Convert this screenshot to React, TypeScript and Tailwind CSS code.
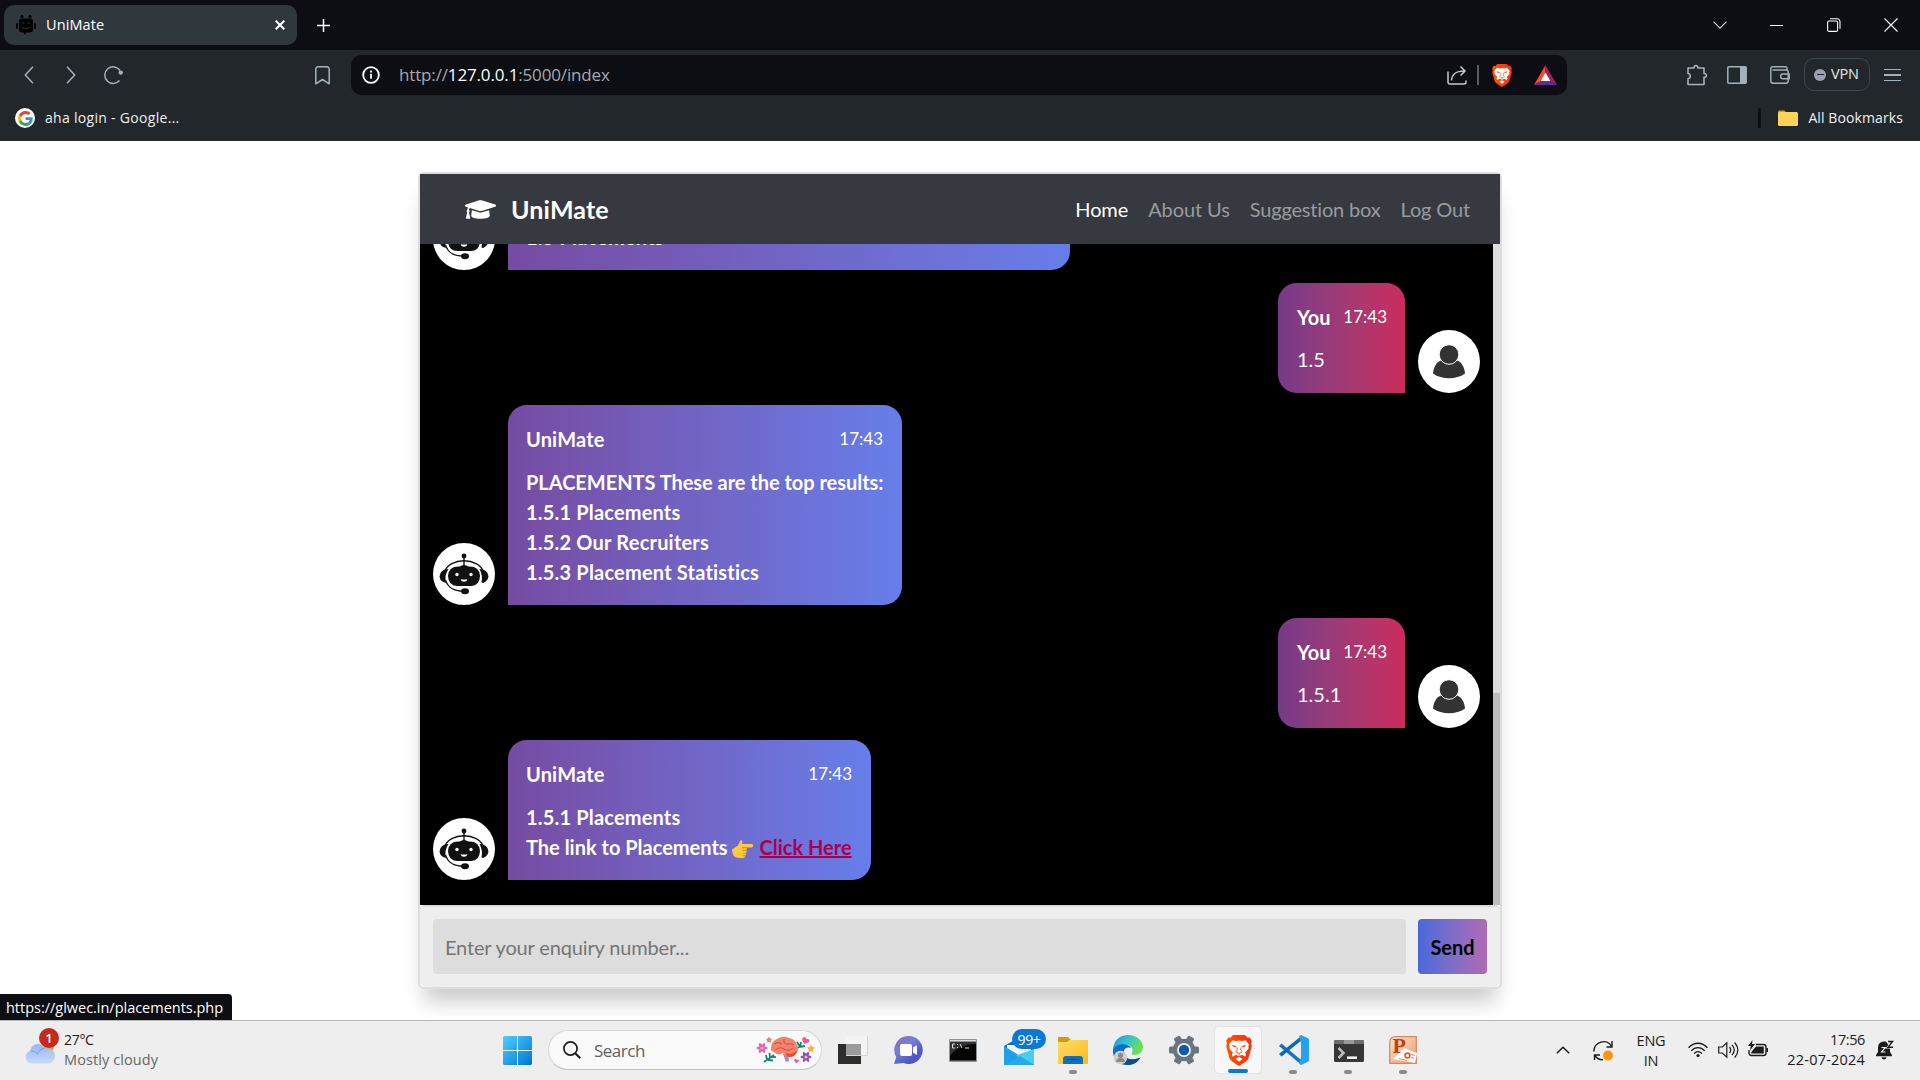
import React from "react";
import { FaGraduationCap } from "react-icons/fa";

const UI = "font-['Open_Sans','Noto_Sans',sans-serif]";

function BraveLion({ className }: { className: string }) {
  return (
    <svg viewBox="0 0 26 31" preserveAspectRatio="none" className={className}>
      <defs>
        <linearGradient id="lion" x1="0" x2="1">
          <stop offset="0" stopColor="#ff5500" />
          <stop offset="1" stopColor="#ff2b10" />
        </linearGradient>
      </defs>
      <path d="M7 0h12l2.500 2.800 2.300-.300 2 3.600-.800 2.600.800 2.300-3.100 11.600c-.500 1.700-1.400 2.800-2.800 3.800L13 31l-6.900-4.600c-1.400-1-2.300-2.100-2.800-3.800L.2 11 1 8.700.2 6.100l2-3.600 2.300.300z" fill="url(#lion)" />
      <path d="M13 5.500l3 .500 3.500-.800 3.500 4-.600 2.300.2 2-3.500 4.200 1 1.800-.8 2.200-3.300-1.900L13 21.300l-3-1.500-3.300 1.900-.8-2.200 1-1.800L3.400 13.500l.2-2L3 9.200l3.500-4 3.500.8z" fill="#fff" />
      <path d="M13 21.800l3.500 2.200L13 26.700l-3.500-2.700z" fill="#fff" />
      <path d="M6.300 10l4.200 1.600-2.800.300zM19.700 10l-4.200 1.600 2.800.3z" fill="#fb4a12" stroke="#fb4a12" strokeWidth=".5" />
      <path d="M11 12.500l.3 2.500-1.600 1.600L13 18.600l3.300-2L14.700 15l.3-2.500M13 18.600v2.200" stroke="#fb4a12" strokeWidth=".9" fill="none" />
    </svg>
  );
}

function TabStrip() {
  return (
    <div className="flex h-[50px] items-center bg-[#0d0e13] pl-1 text-[#e9ebee]">
      <div className="flex h-10 w-[293px] items-center rounded-[10px] bg-[#30373d] pl-3 pr-[12px]">
        <svg viewBox="0 0 20 20" className="h-5 w-5">
          <path d="M6 0v3M14 0v3" stroke="#000" strokeWidth="1.800" />
          <circle cx="6" cy="1.500" r="1.500" /><circle cx="14" cy="1.500" r="1.500" />
          <path d="M6 3.500h8a3 3 0 0 1 3 3v8a3 3 0 0 1-3 3h-3.500L8 20v-2.500H6a3 3 0 0 1-3-3v-8a3 3 0 0 1 3-3z" />
          <rect x="0" y="8" width="2" height="6" rx="1" /><rect x="18" y="8" width="2" height="6" rx="1" />
          <path d="M6 8.500q1.200-1.500 2.500 0M11.500 8.500q1.200-1.500 2.500 0M6.500 12.500q3.500 2 7 0" stroke="#30373d" strokeWidth="1" fill="none" />
        </svg>
        <span className="ml-[10px] text-[14.500px] tracking-[0.100px] text-white">UniMate</span>
        <svg viewBox="0 0 10 10" className="ml-auto h-[10px] w-[10px]"><path d="M.7.7l8.600 8.600M9.300.7L.7 9.300" stroke="#fff" strokeWidth="2" /></svg>
      </div>
      <svg viewBox="0 0 13 13" className="ml-5 h-[13px] w-[13px]"><path d="M6.500 0v13M0 6.500h13" stroke="#fff" strokeWidth="1.500" /></svg>
      <svg viewBox="0 0 14 8" className="ml-auto h-2 w-[14px]"><path d="M.5.700L7 7.200 13.500.7" stroke="#d7d7da" strokeWidth="1.100" fill="none" /></svg>
      <div className="ml-[43px] h-px w-[13px] bg-white" />
      <svg viewBox="0 0 14 14" className="ml-[44px] h-[14px] w-[14px]" fill="none" stroke="#fff" strokeWidth="1.100">
        <rect x=".6" y="3" width="10" height="10.400" rx="1.500" /><path d="M3 .800h7a3 3 0 0 1 3 3v7" />
      </svg>
      <svg viewBox="0 0 14 14" className="ml-[43px] mr-[22px] h-[14px] w-[14px]"><path d="M.5.500l13 13M13.500.5l-13 13" stroke="#f2f2f2" strokeWidth="1.200" /></svg>
    </div>
  );
}

function Toolbar() {
  return (
    <div className="flex h-[50px] items-center bg-[#22272b] text-[#a3b2ba]">
      <svg viewBox="0 0 10 18" className="ml-6 h-[18px] w-[10px]"><path d="M9 .7L1.300 9 9 17.300" stroke="currentColor" strokeWidth="1.500" fill="none" /></svg>
      <svg viewBox="0 0 10 18" className="ml-8 h-[18px] w-[10px]"><path d="M1 .7L8.700 9 1 17.300" stroke="currentColor" strokeWidth="1.500" fill="none" /></svg>
      <svg viewBox="0 0 20 20" className="ml-7 h-5 w-5" fill="none">
        <path d="M15.500 15.500A8.300 8.300 0 1 1 16 5.500" stroke="currentColor" strokeWidth="1.500" />
        <circle cx="16.800" cy="7.600" r="2.200" fill="currentColor" />
      </svg>
      <svg viewBox="0 0 15 19" className="ml-[191px] h-[19px] w-[15px]" fill="none"><path d="M.8 3a2.200 2.200 0 0 1 2.200-2.200h9A2.200 2.200 0 0 1 14.200 3v14.800l-6.700-4.300L.8 17.800z" stroke="currentColor" strokeWidth="1.500" strokeLinejoin="round" /></svg>
      <div className="ml-[21px] flex h-10 w-[1216px] items-center rounded-[10px] bg-[#0d0e13] pl-[11px] pr-[10px]">
        <svg viewBox="0 0 18 18" className="h-[18px] w-[18px]"><circle cx="9" cy="9" r="7.800" stroke="#fff" strokeWidth="1.800" fill="none" /><path d="M9 7.800v5M9 4.600v1.800" stroke="#fff" strokeWidth="1.800" /></svg>
        <span className="ml-[19px] whitespace-nowrap text-[17px] tracking-[-0.150px] text-[#a5a8ad]">http://<span className="text-white">127.0.0.1</span>:5000/index</span>
        <svg viewBox="0 0 20 20" className="ml-auto h-5 w-5" fill="none" stroke="#c6c8cb" strokeWidth="1.500">
          <path d="M1 6.500V17a2 2 0 0 0 2 2h14a2 2 0 0 0 2-2v-1.500" /><path d="M4.500 15.500C5 9.500 8 6 17.500 6M13.500 1.500L18 6l-4.500 4.500" />
        </svg>
        <div className="ml-[10px] h-5 w-[2px] bg-[#5b5d62]" />
        <BraveLion className="ml-[13px] h-[23px] w-5" />
        <svg viewBox="0 0 23 20" className="ml-[22px] h-5 w-[23px]">
          <path d="M11.500 0L0 20l7-3.700L11.500 8z" fill="#ff4724" /><path d="M11.500 0L23 20l-7-3.700L11.500 8z" fill="#9e1f63" /><path d="M0 20l7-4h9l7 4z" fill="#662d91" /><path d="M11.500 7.500l4.800 8.500H6.700z" fill="#fff" />
        </svg>
      </div>
      <svg viewBox="0 0 22 22" className="ml-[119px] h-[22px] w-[22px]" fill="none" stroke="currentColor" strokeWidth="1.600" strokeLinejoin="round">
        <path d="M2 4h6c-.3-3.300 4.200-3.300 3.900 0H18v5.500c3.200-.3 3.200 4.200 0 3.900V20.500H2v-5.800c3-.3 3-5 0-5.200z" />
      </svg>
      <svg viewBox="0 0 20 18" className="ml-[19px] h-[18px] w-5"><rect x=".8" y=".8" width="18.400" height="16.400" rx="1" fill="none" stroke="currentColor" strokeWidth="1.500" /><path d="M13 1h6v16h-6z" fill="currentColor" /></svg>
      <svg viewBox="0 0 20 18" className="ml-[23px] h-[18px] w-5" fill="none" stroke="currentColor" strokeWidth="1.400">
        <path d="M17 4V2.300A1.500 1.500 0 0 0 15.500.8h-13A1.700 1.700 0 0 0 .8 2.500v12.200a2.500 2.500 0 0 0 2.500 2.500h12.400a2.500 2.500 0 0 0 2.500-2.500V6a2 2 0 0 0-2-2H2.500" /><path d="M19.200 8h-6.500a2 2 0 0 0-2 2v.7a2 2 0 0 0 2 2h6.500z" />
      </svg>
      <div className="ml-[14px] mb-[1px] flex h-[33px] w-[66px] items-center rounded-[10px] border border-[#3d474d] pl-[9px] text-[14.500px] text-[#e6e9ef]">
        <div className="flex h-3 w-3 items-center justify-center rounded-full bg-[#9d9db3]"><div className="h-[1.500px] w-[7px] bg-[#22272b]" /></div>
        <span className="mb-[2px] ml-[5px] tracking-[-0.200px]">VPN</span>
      </div>
      <div className="ml-[14px] flex w-[17px] flex-col gap-[4px]">
        <div className="h-[1.500px] bg-current" /><div className="h-[1.500px] bg-current" /><div className="h-[1.500px] bg-current" />
      </div>
    </div>
  );
}

function Bookmarks() {
  return (
    <div className="flex h-[41px] items-center bg-[#22272b] pb-[5px] text-[14px] text-[#eef0f2]">
      <div className="ml-[15px] flex h-5 w-5 items-center justify-center rounded-full bg-white">
        <svg viewBox="0 0 48 48" className="h-[15px] w-[15px]">
          <path fill="#EA4335" d="M24 9.500c3.540 0 6.710 1.220 9.210 3.600l6.850-6.850C35.900 2.380 30.470 0 24 0 14.620 0 6.510 5.380 2.560 13.220l7.980 6.190C12.430 13.720 17.740 9.500 24 9.500z" />
          <path fill="#4285F4" d="M46.980 24.550c0-1.570-.15-3.090-.38-4.550H24v9.020h12.940c-.58 2.960-2.260 5.480-4.780 7.180l7.730 6c4.510-4.180 7.090-10.360 7.090-17.650z" />
          <path fill="#FBBC05" d="M10.530 28.590c-.48-1.450-.76-2.990-.76-4.590s.27-3.140.76-4.590l-7.980-6.190C.92 16.460 0 20.120 0 24s.92 7.540 2.560 10.780l7.970-6.190z" />
          <path fill="#34A853" d="M24 48c6.480 0 11.930-2.130 15.890-5.810l-7.730-6c-2.150 1.450-4.920 2.300-8.160 2.300-6.260 0-11.570-4.220-13.470-9.910l-7.980 6.190C6.510 42.620 14.620 48 24 48z" />
        </svg>
      </div>
      <span className="mb-[2px] ml-[10px] tracking-[0.300px]">aha login - Google...</span>
      <div className="ml-auto h-5 w-[3px] rounded bg-[#0d0e13]" />
      <svg viewBox="0 0 20 16" className="ml-[17px] h-4 w-5"><path d="M0 2a1.500 1.500 0 0 1 1.500-1.500h5L8.500 3H18v12H0z" fill="#d99a12" /><rect y="2" width="20" height="14" rx="1.500" fill="#ffd358" /></svg>
      <span className="mb-[2px] ml-[10px] mr-[17px] tracking-[0.100px]">All Bookmarks</span>
    </div>
  );
}

function BotAvatar() {
  return (
    <svg viewBox="0 0 62 62" className="h-[62px] w-[62px] shrink-0">
      <circle cx="31" cy="31" r="31" fill="#fff" />
      <g fill="#111">
        <circle cx="31" cy="13" r="2.400" />
        <rect x="30.300" y="14" width="1.400" height="9" />
        <path d="M15.500 26a8.500 7.500 0 0 0-9 7.500q.5 5 6.500 6.500-2-7.500 2.500-14zM46.500 26a8.500 7.500 0 0 1 9 7.500q-.5 4-5.200 6.500l-1.800-.500q1.500-7-2-13.500z" />
        <path d="M26.500 23.500q4.500-3 9 0 11-.500 11.500 9.500-.500 10-9 9.900H24q-8.500 0-9-9.900.500-10 11.500-9.500z" />
        <ellipse cx="32" cy="48.200" rx="4" ry="3" />
      </g>
      <path d="M11.500 29C16 14 46 14 50.500 29M12.500 37c2.500 8 8 11 18 11.200" fill="none" stroke="#111" strokeWidth="1.300" />
      <circle cx="24" cy="31.500" r="1.700" fill="#fff" /><circle cx="38" cy="31.500" r="1.700" fill="#fff" />
      <path d="M27.500 36.200q3.500.8 7 0-.8 2.500-3.500 2.500t-3.500-2.500z" fill="#fff" />
    </svg>
  );
}

function UserAvatar() {
  return (
    <svg viewBox="0 0 62 63" preserveAspectRatio="none" className="h-[63px] w-[62px] shrink-0">
      <ellipse cx="31" cy="31.500" rx="31" ry="31.500" fill="#fff" />
      <path d="M15 43.500C15.500 37 18.500 32 23 30.500h16c4.500 1.500 7.500 6.500 8 13-4.500 3.300-10 4.700-16 4.700s-11.500-1.400-16-4.700z" fill="#333" />
      <circle cx="31" cy="24.500" r="9.800" fill="#333" stroke="#fff" strokeWidth="1" />
    </svg>
  );
}

function BotMessage({ width, header = true, children }: { width: number; header?: boolean; children: React.ReactNode }) {
  return (
    <div className="flex items-end gap-[13px]">
      <BotAvatar />
      <div
        className="rounded-[18.750px] rounded-bl-none bg-linear-to-r from-[#764ba2] to-[#667eea] pt-[18.750px] pr-[18px] pb-[18.500px] pl-[18px] text-[20px] leading-[30px] font-bold whitespace-nowrap text-white"
        style={{ width }}
      >
        {header && (
          <div className="mb-[12.750px] flex h-[30px] items-center justify-between pr-[1px]">
            <span className="tracking-[0.150px]">UniMate</span>
            <span className="text-[17px] font-normal">17:43</span>
          </div>
        )}
        {children}
      </div>
    </div>
  );
}

function UserMessage({ text }: { text: string }) {
  return (
    <div className="flex items-end justify-end gap-[13px]">
      <div className="h-[110px] w-[127px] rounded-[18.750px] rounded-br-none bg-linear-to-r from-[#753a88] to-[#cc2b5e] pt-[19.250px] pr-[18px] pl-[19px] text-[20px] leading-[30px] text-white">
        <div className="mb-[12px] flex h-[30px] items-center justify-between">
          <span className="pt-px font-bold">You</span>
          <span className="text-[17px]">17:43</span>
        </div>
        {text}
      </div>
      <UserAvatar />
    </div>
  );
}

function PointingHand() {
  return (
    <svg viewBox="0 0 21 18" className="ml-[4px] mr-[2px] inline-block h-[18px] w-[21px] align-[-3px]">
      <path d="M0 9.500L6 5.500 8.200.800Q9.700-.300 10.500 1L10 4h9.500a1.600 1.600 0 0 1 0 3.500H14q1.500 1 .3 2.600 1 1.500-.3 2.700.8 1.700-.8 2.600.3 2.400-2.200 2.600H6.500Q0 17.500 0 9.500z" fill="#ffc83d" />
      <path d="M10 7.700h4.500M11 10.500h3.500M11 13.200h3.200M10.500 15.800h2.700" stroke="#d67d00" strokeWidth=".8" />
    </svg>
  );
}

function ChatCard() {
  return (
    <div className="ml-[418px] mt-[31px] flex h-[817px] w-[1084px] flex-col rounded-[6px] border-2 border-[#ddd] bg-white font-['Lato',sans-serif] shadow-[0_18.750px_18.750px_-6.250px_rgba(0,0,0,0.200)] [font-variant-ligatures:none]">
      <nav className="flex h-[70px] shrink-0 items-center bg-[#363940] pl-[45px] pr-[30px] text-[20px] text-[#999c9f]">
        <FaGraduationCap className="h-[31px] w-[31px] text-white" />
        <span className="ml-[15px] pt-[2px] text-[25px] font-bold tracking-[0.150px] text-white">UniMate</span>
        <div className="ml-auto flex gap-5 whitespace-nowrap">
          <span className="tracking-[-0.100px] text-white">Home</span>
          <span className="tracking-[-0.100px]">About Us</span>
          <span className="tracking-[-0.180px]">Suggestion box</span>
          <span className="tracking-[-0.150px]">Log Out</span>
        </div>
      </nav>
      <div className="flex h-[661px] shrink-0 bg-black">
        <main className="flex min-w-0 flex-1 flex-col justify-end gap-[12.500px] overflow-hidden px-[13px] pb-[25px]">
          <BotMessage width={562} header={false}><div className="tracking-[0.180px]">1.5 Placements</div></BotMessage>
          <UserMessage text="1.5" />
          <BotMessage width={394}>
            <div className="tracking-[-0.030px]">PLACEMENTS These are the top results:</div>
            <div className="tracking-[0.180px]">1.5.1 Placements</div>
            <div className="tracking-[0.200px]">1.5.2 Our Recruiters</div>
            <div className="tracking-[0.200px]">1.5.3 Placement Statistics</div>
          </BotMessage>
          <UserMessage text="1.5.1" />
          <BotMessage width={363}>
            <div className="tracking-[0.180px]">1.5.1 Placements</div>
            <div>The link to Placements<PointingHand /> <span className="text-[#a8004c] underline decoration-2">Click Here</span></div>
          </BotMessage>
        </main>
        <div className="flex w-[7px] flex-col justify-end bg-[#ddd]"><div className="h-[212px] bg-[#bdbdbd]" /></div>
      </div>
      <div className="flex h-[82px] shrink-0 gap-3 rounded-[5px] border-t-2 border-[#ddd] bg-[#eee] px-[13px] py-3 pb-[13px]">
        <div className="flex h-[55px] w-[973px] items-center rounded-[4px] bg-[#ddd] pl-[12px] text-[20px] tracking-[-0.150px] text-[#757575]">Enter your enquiry number...</div>
        <div className="flex h-[55px] w-[69px] items-center justify-center rounded-[4px] bg-linear-to-r from-[#4568dc] to-[#b06ab3] text-[20px] font-bold text-black">Send</div>
      </div>
    </div>
  );
}

function AppSlot({ active, dot, children }: { active?: boolean; dot?: boolean; children: React.ReactNode }) {
  return (
    <div className={active ? "relative flex h-12 w-12 items-center justify-center rounded-[5px] border border-[#e3e3e3] bg-[#f8f8f8]" : "relative flex h-12 w-12 items-center justify-center"}>
      {children}
      {active && <div className="absolute bottom-0 h-1 w-5 rounded-full bg-[#0a78d6]" />}
      {dot && <div className="absolute bottom-0 h-1 w-2 rounded-full bg-[#8a8a8a]" />}
    </div>
  );
}

function Flower({ x, y, c }: { x: number; y: number; c: string }) {
  return (
    <g transform={`translate(${x} ${y})`}>
      {[0, 60, 120].map((a) => <ellipse key={a} rx="5.500" ry="1.700" fill={c} transform={`rotate(${a})`} />)}
      <circle r="1.500" fill="#ffc83d" />
    </g>
  );
}

function SearchArt() {
  return (
    <svg viewBox="0 0 60 28" className="h-7 w-[60px]">
      <Flower x={6} y={12} c="#e85bc0" /><Flower x={50} y={21} c="#8b4fd0" />
      <path d="M13 .5l1 2 2.200.3-1.500 1.700.3 2.300-2-1-2 1 .3-2.300-1.500-1.700 2.200-.3z" fill="#f08060" />
      <path d="M55 8l1.200 3 3 .4-2.200 2 .6 3-2.600-1.500-2.600 1.500.6-3-2.200-2 3-.4z" fill="#f5b52e" />
      <path d="M46 3q2.500-4 4.500 0 4-.500 2.500 3l-5 2zM38 24q1.500-2 3 0 2.500-1 2 1l-3 2.500z" fill="#f0579f" />
      <path d="M8 26l10-7M11 24l-1-5M14 22l-.5-5M12 24l5 .5M15 21l5 .2M43 11l6-1M44 11l-3-5M44 11l1-5M44 11l-3 1" stroke="#138a72" strokeWidth="1.800" />
      <path d="M27 18h5l1 7-3 1z" fill="#9a86d8" />
      <path d="M15 11q1-6 6-8 6-4 12-1 6 1 8 7 3 5-1 8-2 4-7 4-5 0-6-4-5 3-9-1-4-1-3-5z" fill="#f5826a" />
      <path d="M30 17q5 2 11-2-1 6-8 6-3 0-3-4z" fill="#f04a28" />
      <path d="M18 8q4-3 8 0M28 3q-1 6 4 5t6 1M19 14q5-4 9-1t9-1" stroke="#c9523f" fill="none" />
    </svg>
  );
}

function Taskbar() {
  return (
    <div className="flex h-[60px] border-t border-[#b9b9b9] bg-[#eee]">
      <div className="flex w-[493px] pt-[9px] text-[14px] leading-[20px]">
        <div className="relative ml-[25px] mt-[12px] h-[22px] w-[30px]">
          <svg viewBox="1 0 29 22" preserveAspectRatio="none" className="h-[22px] w-[30px]">
            <defs><linearGradient id="cloud" x2="0" y2="1"><stop stopColor="#94b8f2" /><stop offset="1" stopColor="#c8daf8" /></linearGradient></defs>
            <circle cx="24" cy="5" r="5" fill="#f7941e" />
            <path d="M7 21.500a6.500 6.500 0 0 1-1-12.500C7 4 10 2 13.500 2c3 0 5 1.500 6 4 6-1 10.500 3 10.500 8 0 4-3 7.500-7 7.500z" fill="url(#cloud)" />
            <path d="M6 9q5 0 7 3 2-5 7-6" fill="none" stroke="#7ba4e8" strokeWidth="1" />
          </svg>
          <div className="absolute -top-[14px] left-[14px] flex h-5 w-5 items-center justify-center rounded-full bg-[#c42b1c] text-[13px] font-semibold text-white">1</div>
        </div>
        <div className="ml-[9px]">
          <div className="tracking-[-0.300px] text-[#1c1c1c]">27°C</div>
          <div className="whitespace-nowrap text-[14.500px] tracking-[0.100px] text-[#666]">Mostly cloudy</div>
        </div>
      </div>
      <div className="mt-[5px] flex h-12 items-center">
        <AppSlot>
          <svg viewBox="0 0 29 29" className="mt-[1px] h-[29px] w-[29px]"><defs><linearGradient id="win" x2="1" y2="1"><stop stopColor="#4fd0fb" /><stop offset="1" stopColor="#0075d4" /></linearGradient></defs><path d="M1 0h13v14H0V1zM15 0h13l1 1v13H15zM0 15h14v14H1l-1-1zM15 15h14v13l-1 1H15z" fill="url(#win)" /></svg>
        </AppSlot>
        <div className="ml-[7px] flex h-10 w-[274px] items-center rounded-full border border-[#d6d6d6] border-b-[#c2c2c2] bg-[#fafafa] pl-[14px] pr-[5px] text-[17px] text-[#606060]">
          <svg viewBox="0 0 18 18" className="h-[18px] w-[18px]"><circle cx="7.500" cy="7.500" r="6.600" fill="none" stroke="#1c1c1c" strokeWidth="1.700" /><path d="M12.200 12.200L17.300 17.300" stroke="#1c1c1c" strokeWidth="2" /></svg>
          <span className="ml-[13px] pt-px tracking-[-0.500px]">Search</span>
          <div className="ml-auto"><SearchArt /></div>
        </div>
        <div className="ml-[7px] flex gap-[7px]">
          <AppSlot>
            <svg viewBox="0 0 30 28" className="h-7 w-[30px]"><rect y="8" width="23" height="20" fill="#2d2d2c" /><rect x="8" y="0" width="22" height="20" fill="#f4f4f4" /><rect x="8" y="8" width="15" height="12" fill="#9b9b9b" /><path d="M8 19.500h21.500V0" stroke="#d5d5d5" fill="none" /></svg>
          </AppSlot>
          <AppSlot>
            <svg viewBox="0 0 29 28" className="h-7 w-[29px]"><defs><linearGradient id="meet" x1="0" x2=".8" y2="1"><stop stopColor="#9a62a5" /><stop offset=".4" stopColor="#7480d8" /><stop offset=".8" stopColor="#5057c4" /></linearGradient></defs><path d="M14.500 0a14 14 0 1 1-5 27L0 28l2.200-7A14 14 0 0 1 14.500 0z" fill="url(#meet)" /><rect x="6" y="8" width="12" height="12" rx="2" fill="#fff" /><path d="M19 11.500L23 9v10l-4-2.500z" fill="#fff" /></svg>
          </AppSlot>
          <AppSlot>
            <svg viewBox="0 0 28 23" className="h-[23px] w-7"><rect width="28" height="23" rx="1" fill="#8d939c" /><rect x="1" y="3" width="26" height="18.500" fill="#050505" /><path d="M1 17q8-12 26-12V3H1z" fill="#333" /><path d="M1 1.500h26" stroke="#dadde2" /><path d="M6 5H3.500v4H6M8.500 5v1M8.500 8v1M11 5l2 4M16 9h4" stroke="#ddd" fill="none" /></svg>
          </AppSlot>
          <AppSlot>
            <svg viewBox="0 0 30 24" className="ml-px mt-[6px] h-6 w-[30px]"><path d="M0 5L9 0h12l9 5v19H0z" fill="#0f6cbd" /><path d="M3 4h24v8l-12 6L3 8z" fill="#f3f3f3" /><path d="M0 5l30 19H0z" fill="#1ea0e6" /><path d="M30 8v16L12 14.500z" fill="#47cdf5" /><path d="M0 24h30L16 15z" fill="#2aa9ea" /></svg>
            <div className="absolute left-[18px] top-[3px] flex h-5 w-[34px] items-center justify-center rounded-full bg-[#0a78d6] text-[14px] tracking-[-0.300px] text-white">99+</div>
          </AppSlot>
          <AppSlot dot>
            <svg viewBox="0 0 30 27" className="h-[27px] w-[30px]"><defs><linearGradient id="fold" x2="1" y2="1"><stop stopColor="#ffdc6e" /><stop offset="1" stopColor="#fdba12" /></linearGradient></defs><path d="M0 1q0-1 1-1h9l3 3h-1l-2 2H0z" fill="#d99a08" /><path d="M0 5h9l3-2h18v23q0 1-1 1H1q-1 0-1-1z" fill="url(#fold)" /><path d="M5 27v-5q0-3 3-3h14q3 0 3 3v5z" fill="#0d70c4" /><path d="M9 22.500h12" stroke="#0a4e93" strokeWidth="1.200" /></svg>
          </AppSlot>
          <AppSlot>
            <svg viewBox="0 0 30 30" className="h-[30px] w-[30px]">
              <defs><linearGradient id="edgeTop" x2="1" y2=".4"><stop stopColor="#1b93dd" /><stop offset=".5" stopColor="#35c1cf" /><stop offset="1" stopColor="#6be052" /></linearGradient></defs>
              <path d="M0 14C1 5 7 0 15 0c9 0 15 6 15 12 0 5-4 8-8 8-3 0-4-1-3-2.500C21 14 18 10 13 10c-3 0-9 1-13 4z" fill="url(#edgeTop)" />
              <path d="M0 14c4-6 15-6 18-1-5-2-8 2-7 6 1 5 7 7 16 4-4 7-17 10-23 3C1 23-.500 19 0 14z" fill="#0f6fc6" />
              <path d="M11 19c1 5 8 7 16.500 3.500C24 29 17 31 12 29.500z" fill="#114a8b" />
              <circle cx="7.500" cy="22.500" r="6.800" fill="#d0cfce" /><circle cx="7.500" cy="20.300" r="2.600" fill="#8d8a88" /><path d="M3 27q0-4 4.500-4t4.500 4z" fill="#8d8a88" />
            </svg>
          </AppSlot>
          <AppSlot>
            <svg viewBox="0 0 30 30" className="ml-px h-[30px] w-[30px]">
              <g fill="#6b747d">{[0, 60, 120].map((a) => <rect key={a} x="11.500" y="0" width="7" height="30" rx="1.500" transform={`rotate(${a + 30} 15 15)`} />)}<circle cx="15" cy="15" r="11.200" /></g>
              <circle cx="15" cy="15" r="7" fill="#e9eef2" /><circle cx="15" cy="15" r="5.200" fill="#0f5ba8" />
            </svg>
          </AppSlot>
          <AppSlot active><BraveLion className="ml-px h-[31px] w-[26px]" /></AppSlot>
          <AppSlot dot>
            <svg viewBox="0 0 30 30" className="ml-px h-[30px] w-[30px]"><path d="M2.500 8.500L22 25v4.500L.5 11.500Q0 11 .5 10.500z" fill="#1177bd" /><path d="M2.500 21.500L23 5V.5L.5 18.500Q0 19 .5 19.500z" fill="#0a6cb0" /><path d="M22 0l6.500 3Q30 3.700 30 5v20q0 1.300-1.500 2L22 30l-2-1.500L22 22V8l-2-6.500z" fill="#27a3ee" /><path d="M22 8.500v13L13.500 15z" fill="#eee" /></svg>
          </AppSlot>
          <AppSlot dot>
            <svg viewBox="0 0 30 22" className="ml-px mt-[1px] h-[22px] w-[30px]"><rect width="30" height="22" rx="1.500" fill="#363636" /><path d="M0 4V1.500Q0 0 1.500 0H10v4z" fill="#6d6d6d" /><path d="M10 0h10v4H10z" fill="#999" /><path d="M20 0h8.500Q30 0 30 1.500V4H20z" fill="#6f6f6f" /><path d="M4.500 8l5 5-5 5" stroke="#bdbdbd" strokeWidth="2.500" fill="none" /><path d="M13 17.700h10" stroke="#fff" strokeWidth="2.500" /></svg>
          </AppSlot>
          <AppSlot dot>
            <div className="relative -mt-[1px] h-7 w-[29px]">
              <svg viewBox="0 0 29 28" className="h-7 w-[29px]"><defs><linearGradient id="ppt" x2="1" y2="1"><stop stopColor="#fbe3d3" /><stop offset="1" stopColor="#f09a6a" /></linearGradient></defs><path d="M7 .7h20.300v26.600H.7V7q0-6.300 6.300-6.300z" fill="url(#ppt)" stroke="#d9855c" strokeWidth="1.200" /><path d="M15 12l13 5-2 10-22-4z" fill="#fff" /><circle cx="18.500" cy="19.500" r="2.400" fill="none" stroke="#e0592a" strokeWidth="1.600" /><path d="M22 18.500l4 1M22 21.500l3 .7M10 22.500l8 2" stroke="#e9865f" /></svg>
              <span className="absolute left-[4px] top-[-1px] font-['Liberation_Serif',serif] text-[22px] leading-[22px] font-bold text-[#c0420f]">P</span>
            </div>
          </AppSlot>
        </div>
      </div>
      <div className="ml-auto flex text-[14px] leading-[20px] text-[#1c1c1c]">
        <svg viewBox="0 0 14 8" className="mt-[25px] h-2 w-[14px]"><path d="M.8 7.300L7 1.200l6.200 6.100" stroke="#1c1c1c" strokeWidth="1.500" fill="none" /></svg>
        <svg viewBox="0 0 21 21" className="ml-[23px] mt-[19px] h-[21px] w-[21px]" fill="none" stroke="#1c1c1c" strokeWidth="1.400"><path d="M.8 11.500C.8 2 14 -2.500 18.500 6.500M19 1v6h-5.500M1.500 20v-5h5.500M1.800 15.500Q5 20 10 19.800" /><circle cx="15" cy="15.500" r="5" fill="#ff9800" stroke="none" /></svg>
        <div className="ml-[21px] w-[32px] pt-[10px] text-center text-[14.500px] tracking-[-0.200px]"><div>ENG</div><div>IN</div></div>
        <svg viewBox="0 0 20 16" className="ml-[21px] mt-[21px] h-4 w-5" fill="none" stroke="#1c1c1c" strokeWidth="1.300"><path d="M.5 5.800C6-.3 14-.3 19.500 5.800M3.300 8.800c4-4.300 9.400-4.300 13.400 0M6 11.600c2.500-2.600 5.500-2.600 8 0" /><circle cx="10" cy="13.500" r="1.600" fill="#1c1c1c" stroke="none" /></svg>
        <svg viewBox="0 0 21 18" className="ml-[10px] mt-[20px] h-[18px] w-[21px]" fill="none" stroke="#1c1c1c" strokeWidth="1.200"><path d="M.7 6h3.600l4.500-4.200v14.400L4.300 12H.7zM11.500 6q2.500 3 0 6M14 3.800q4.500 5.200 0 10.400M16.700 1.500q6.300 7.500 0 15" /></svg>
        <svg viewBox="0 0 21 17" className="ml-[9px] mt-[19px] h-[17px] w-[21px]"><path d="M8 4.500h7.500a2.500 2.500 0 0 1 2.500 2.500v6a2.500 2.500 0 0 1-2.500 2.500h-12A2.500 2.500 0 0 1 1 13v-3" fill="none" stroke="#1c1c1c" strokeWidth="1.400" /><path d="M8 6.500h7.800v7H3.300V12zM18.500 8H20v4h-1.500z" fill="#1c1c1c" /><path d="M4.500 0L0 6h2.800L2 10.500 7 4H4z" fill="#1c1c1c" /></svg>
        <div className="ml-[10px] w-[86px] whitespace-nowrap pt-[9px] text-right text-[14.500px]"><div className="tracking-[-0.400px]">17:56</div><div className="tracking-[0.200px]">22-07-2024</div></div>
        <svg viewBox="0 0 18 20" className="ml-[11px] mr-[26px] mt-[19px] h-5 w-[18px]"><path d="M8 1.500q-6 .5-6 6V12L0 15v1.200h16V15l-2-3V7L10 1.500zM5.500 17.300h5Q10 19.500 8 19.500t-2.500-2.200z" fill="#1c1c1c" /><path d="M5.500 7.500h3.800L5.500 12h4" stroke="#eee" strokeWidth="1.200" fill="none" /><path d="M12 1.500h4.500L12 7.300h5" stroke="#eee" strokeWidth="2.600" fill="none" /><path d="M12 1.500h4.500L12 7.300h5" stroke="#1c1c1c" strokeWidth="1.500" fill="none" /></svg>
      </div>
    </div>
  );
}

export default function App() {
  return (
    <div className={`${UI} relative flex h-[1080px] w-[1920px] flex-col overflow-hidden bg-white`}>
      <TabStrip />
      <Toolbar />
      <Bookmarks />
      <div className="h-[879px] shrink-0">
        <ChatCard />
      </div>
      <div className="absolute bottom-[60px] left-0 flex h-[26px] w-[232px] items-center rounded-tr-[4px] bg-[#0d0e13] pl-[6px] pt-px text-[14.500px] tracking-[-0.020px] whitespace-nowrap text-white">
        https://glwec.in/placements.php
      </div>
      <Taskbar />
    </div>
  );
}
